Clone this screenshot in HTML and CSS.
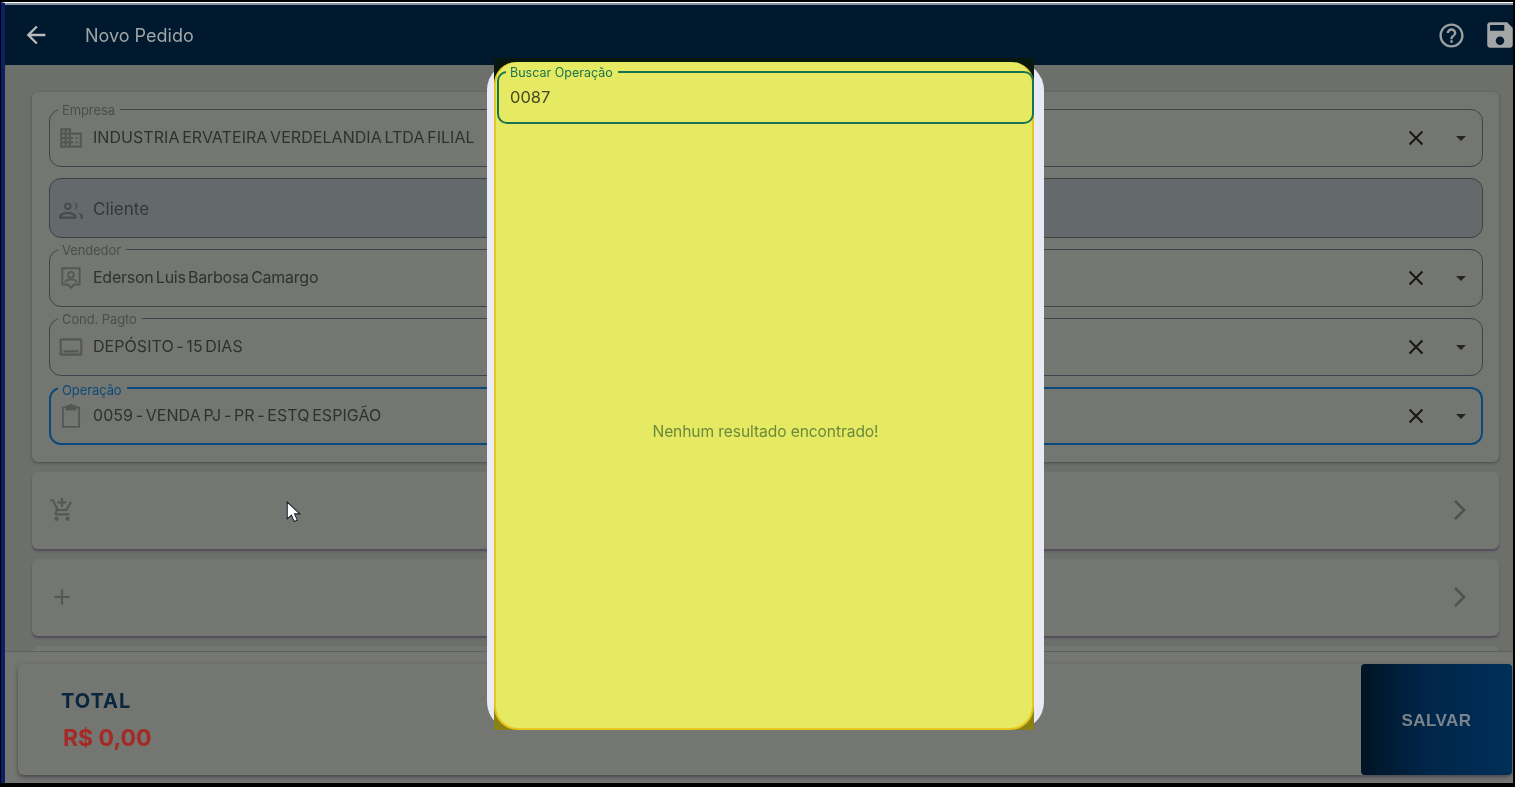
FILE: index.html
```html
<!DOCTYPE html>
<html lang="pt-BR">
<head>
    <meta charset="UTF-8">
    <title>Novo Pedido</title>
    <link rel="stylesheet" href="styles.css">
</head>
<body>
    <div class="screen">
        <header class="topbar">
            <svg class="icon back" viewBox="0 0 24 24"><path d="M20 11H7.83l5.59-5.59L12 4l-8 8 8 8 1.41-1.41L7.83 13H20v-2z"/></svg>
            <span class="title">Novo Pedido</span>
            <svg class="icon help" viewBox="0 0 24 24"><path d="M11 18h2v-2h-2v2zm1-16C6.48 2 2 6.48 2 12s4.48 10 10 10 10-4.48 10-10S17.52 2 12 2zm0 18c-4.41 0-8-3.59-8-8s3.59-8 8-8 8 3.59 8 8-3.59 8-8 8zm0-14c-2.21 0-4 1.79-4 4h2c0-1.1.9-2 2-2s2 .9 2 2c0 2-3 1.75-3 5h2c0-2.25 3-2.5 3-5 0-2.21-1.79-4-4-4z"/></svg>
            <svg class="icon save" viewBox="0 0 24 24"><path d="M17 3H5c-1.11 0-2 .9-2 2v14c0 1.1.89 2 2 2h14c1.1 0 2-.9 2-2V7l-4-4zm-5 16c-1.66 0-3-1.34-3-3s1.34-3 3-3 3 1.34 3 3-1.34 3-3 3zm3-10H5V5h10v4z"/></svg>
        </header>

        <main class="content">
            <section class="card">
                <div class="field">
                    <span class="field-label">Empresa</span>
                    <svg class="icon field-icon" viewBox="0 0 24 24"><path d="M12 7V3H2v18h20V7H12zM6 19H4v-2h2v2zm0-4H4v-2h2v2zm0-4H4V9h2v2zm0-4H4V5h2v2zm4 12H8v-2h2v2zm0-4H8v-2h2v2zm0-4H8V9h2v2zm0-4H8V5h2v2zm10 12h-8v-2h2v-2h-2v-2h2v-2h-2V9h8v10zm-2-8h-2v2h2v-2zm0 4h-2v2h2v-2z"/></svg>
                    <span class="field-value">INDUSTRIA ERVATEIRA VERDELANDIA LTDA FILIAL</span>
                    <svg class="close" viewBox="0 0 24 24"><path d="M5 5l14 14M19 5L5 19"/></svg>
                    <span class="caret"></span>
                </div>

                <div class="field field-disabled">
                    <svg class="icon field-icon" viewBox="0 0 24 24"><path d="M9 12c1.9 0 3.5-1.6 3.5-3.5S10.900 5 9 5 5.500 6.600 5.500 8.500 7.100 12 9 12zm0-5.200c.9 0 1.700.8 1.700 1.700s-.8 1.700-1.700 1.700-1.700-.8-1.700-1.700S8.100 6.800 9 6.800zM9 13.800c-2.700 0-8 1.300-8 3.900V20h16v-2.300c0-2.600-5.300-3.900-8-3.900zM3 18c.3-.9 3.500-2.400 6-2.400s5.700 1.500 6 2.400H3zM14.500 5.200c1.300.8 2 1.900 2 3.300s-.7 2.500-2 3.300c2-.1 3.500-1.500 3.500-3.300s-1.500-3.200-3.500-3.300zM17.800 14.200c1.700.9 3 2 3 3.500V20H23v-2.300c0-1.800-2.500-3.100-5.200-3.500z"/></svg>
                    <span class="field-value field-value-large">Cliente</span>
                </div>

                <div class="field">
                    <span class="field-label">Vendedor</span>
                    <svg class="icon field-icon" viewBox="0 0 24 24"><path class="line" d="M4 3h16v15h-5l-3 3-3-3H4z"/><circle class="line" cx="12" cy="9" r="2.700"/><path class="line" d="M6.500 16c1-2 3-2.700 5.500-2.700s4.500.7 5.500 2.700"/></svg>
                    <span class="field-value field-value-mixed">Ederson Luis Barbosa Camargo</span>
                    <svg class="close" viewBox="0 0 24 24"><path d="M5 5l14 14M19 5L5 19"/></svg>
                    <span class="caret"></span>
                </div>

                <div class="field">
                    <span class="field-label">Cond. Pagto</span>
                    <svg class="icon field-icon" viewBox="0 0 24 24"><path d="M21 4H3c-.8 0-1.500.7-1.500 1.500v13c0 .8.700 1.500 1.500 1.500h18c.8 0 1.500-.7 1.500-1.500v-13C22.500 4.700 21.800 4 21 4zm-.5 14h-17V6h17v12zM5 15h14v2H5z"/></svg>
                    <span class="field-value">DEPÓSITO - 15 DIAS</span>
                    <svg class="close" viewBox="0 0 24 24"><path d="M5 5l14 14M19 5L5 19"/></svg>
                    <span class="caret"></span>
                </div>

                <div class="field field-focus">
                    <span class="field-label">Operação</span>
                    <svg class="icon field-icon" viewBox="0 0 24 24"><path class="line" d="M8 4H4.500v18h15V4H16"/><path class="line fill" d="M8 3h2.500a1.500 1.500 0 0 1 3 0H16v3H8z"/></svg>
                    <span class="field-value">0059 - VENDA PJ - PR - ESTQ ESPIGÃO</span>
                    <svg class="close" viewBox="0 0 24 24"><path d="M5 5l14 14M19 5L5 19"/></svg>
                    <span class="caret"></span>
                </div>
            </section>

            <section class="row">
                <svg class="icon row-icon" viewBox="0 0 24 24"><path d="M11 9h2V6h3V4h-3V1h-2v3H8v2h3v3zm-4 9c-1.100 0-1.990.9-1.990 2S5.900 22 7 22s2-.9 2-2-.9-2-2-2zm10 0c-1.100 0-1.990.9-1.990 2s.89 2 1.990 2 2-.9 2-2-.9-2-2-2zm-9.830-3.250l.03-.12.9-1.630h7.450c.75 0 1.410-.41 1.750-1.030l3.860-7.010L19.420 4h-.01l-1.100 2-2.760 5H8.530l-.13-.27L6.160 6l-.95-2-.94-2H1v2h2l3.600 7.590-1.350 2.450c-.16.28-.25.61-.25.96 0 1.100.9 2 2 2h12v-2H7.420c-.13 0-.25-.11-.25-.25z"/></svg>
                <svg class="chevron" viewBox="0 0 24 24"><path d="M6 1l11 11L6 23"/></svg>
            </section>
            <section class="row">
                <svg class="icon row-icon" viewBox="0 0 24 24"><path d="M19 13h-6v6h-2v-6H5v-2h6V5h2v6h6v2z"/></svg>
                <svg class="chevron" viewBox="0 0 24 24"><path d="M6 1l11 11L6 23"/></svg>
            </section>
            <section class="row"></section>
        </main>

        <footer class="footer">
            <div class="totals">
                <div class="total-text">
                    <span class="total-label">TOTAL</span>
                    <span class="total-value">R$ 0,00</span>
                </div>
                <button class="save-btn">SALVAR</button>
            </div>
        </footer>
    </div>

    <!-- modal de busca por cima da tela -->
    <div class="modal">
        <div class="modal-shell">
            <div class="modal-panel">
                <div class="search">
                    <span class="search-label">Buscar Operação</span>
                    <span class="search-value">0087</span>
                </div>
                <p class="empty">Nenhum resultado encontrado!</p>
            </div>
        </div>
    </div>

    <svg class="cursor" viewBox="0 0 14 22"><path d="M1 1v16l4-3.600 2.600 6.200 3-1.300-2.600-6h5z"/></svg>
</body>
</html>
```

FILE: styles.css
```css
* {
    box-sizing: border-box;
}
body {
    margin: 0;
    height: 787px;
    padding: 2px 2px 4px 1px;
    background-color: black;
    font-family: Inter, "Liberation Sans", sans-serif;
    overflow: hidden;
}
.screen {
    height: 100%;
    border-left: 4px solid #0b1f68;
    border-top: 1px solid white;
    background-color: #6d6f6b;
    display: flex;
    flex-direction: column;
    overflow: hidden;
    filter: blur(0.4px); /* a captura original e meio borrada */
}
.icon {
    fill: currentColor;
    flex: none;
}

/* barra superior */
.topbar {
    flex: none;
    height: 62px;
    border-top: 2px solid #8a95a3;
    background-color: #00192f;
    color: #a7acab;
    display: flex;
    align-items: center;
    padding-right: 0;
}
.back {
    width: 28px;
    height: 28px;
    margin-left: 17px;
    color: #b8bcbb;
}
.title {
    margin-left: 35px;
    font-size: 18px;
    flex: 1;
    color: #a0a5a5;
}
.help {
    width: 29px;
    height: 29px;
    color: #9a9f9f;
}
.save {
    width: 34px;
    height: 34px;
    margin-left: 17px;
    margin-right: -4px;
    color: #a2a6a6;
}

/* conteudo */
.content {
    flex: 1;
    min-height: 0;
    overflow: hidden;
    padding: 27px 14px 0 27px;
    display: flex;
    flex-direction: column;
    gap: 10px;
}
.card {
    flex: none;
    background-color: #747672;
    border-radius: 6px;
    padding: 17px 16px 17px 17px;
    display: flex;
    flex-direction: column;
    gap: 11px;
    box-shadow: 0 1px 3px rgba(40, 35, 50, 0.5);
}
.field {
    position: relative;
    height: 58px;
    border: 1px solid #41424b;
    border-radius: 12px;
    display: flex;
    padding: 16px 16px 0 8px;
}
.field-label {
    position: absolute;
    left: 8px;
    top: -7px;
    padding: 0 5px 0 4px;
    background-color: #747672;
    font-size: 13px;
    line-height: 15px;
    letter-spacing: -0.1px;
    color: #4c4e4c;
}
.field-icon {
    width: 26px;
    height: 26px;
    margin-top: -1px;
    color: #555755;
}
.field-value {
    margin-left: 9px;
    font-size: 16px;
    line-height: 22px;
    color: #2f312f;
    flex: 1;
    letter-spacing: 0.05px;
    word-spacing: -1.9px;
}
.field-value-mixed {
    letter-spacing: -0.25px;
}
.close {
    width: 22px;
    height: 22px;
    margin-top: 1px;
    fill: none;
    stroke: #161616;
    stroke-width: 2.2;
}
.caret {
    width: 0;
    height: 0;
    margin: 10px 0 0 29px;
    border-left: 5px solid transparent;
    border-right: 5px solid transparent;
    border-top: 5px solid #242424;
}
.field-disabled {
    height: 60px;
    padding-top: 19px;
    background-color: #646a6c;
    border-color: #3f4245;
    border-width: 1.5px;
}
.field-disabled .field-icon {
    color: #474a4a;
}
.field-value-large {
    font-size: 17px;
    color: #333836;
}
.field-focus {
    border: 2px solid #0b4a7c;
    padding-left: 7px;
    padding-top: 15px;
    padding-right: 15px;
}
.field-focus .field-label {
    left: 7px;
    top: -6px;
    color: #0d4a78;
}
.line {
    fill: none;
    stroke: #555755;
    stroke-width: 1.700;
}
.fill {
    fill: #555755;
}
.row {
    flex: none;
    height: 77px;
    background-color: #747672;
    border-radius: 6px;
    display: flex;
    align-items: center;
    justify-content: space-between;
    padding: 0 29px 0 17px;
    box-shadow: 0 2px 2px rgba(75, 65, 85, 0.8);
}
.row-icon {
    width: 26px;
    height: 26px;
    margin-top: -1px;
    color: #555755;
}
.chevron {
    width: 20px;
    height: 24px;
    margin-top: -1px;
    fill: none;
    stroke: #4f514e;
    stroke-width: 3;
}

/* rodape */
.footer {
    flex: none;
    height: 132px;
    background-color: #747672;
    border-top: 1px solid #5f5e62;
    padding: 12px 1px 8px 13px;
    position: relative;
}
.totals {
    height: 100%;
    border-radius: 6px;
    display: flex;
    justify-content: space-between;
    box-shadow: 0 2px 4px rgba(60, 55, 70, 0.8);
}
.total-text {
    display: flex;
    flex-direction: column;
    padding: 25px 0 0 43px;
}
.total-label {
    font-size: 20px;
    line-height: 24px;
    font-weight: 700;
    letter-spacing: 1px;
    color: #08263e;
}
.total-value {
    margin-top: 11px;
    margin-left: 2px;
    font-size: 23px;
    line-height: 28px;
    font-weight: 700;
    color: #a52a25;
}
.save-btn {
    width: 151px;
    border: none;
    border-radius: 4px;
    padding-top: 4px;
    background: linear-gradient(90deg, #001525, #00264a 45%, #002f58);
    color: #7b838b;
    font-family: "Liberation Sans", sans-serif;
    font-size: 17px;
    font-weight: 700;
    letter-spacing: 0.4px;
}

/* modal */
.modal {
    position: absolute;
    left: 487px;
    top: 62px;
    width: 557px;
    height: 668px;
    background-color: #e8eaf6;
    border-radius: 28px;
    filter: blur(0.4px);
}
.modal-shell {
    position: absolute;
    left: 7px;
    top: -4px;
    width: 540px;
    height: 672px;
    padding-top: 4px;
    background: linear-gradient(#08180f 20%, #8a8214 20%);
}
.modal-panel {
    height: 100%;
    background-color: #e6ea62;
    border: solid #e8c51f;
    border-width: 0 2px 2px 2px;
    border-radius: 22px 22px 24px 24px;
    display: flex;
    flex-direction: column;
}
.search {
    position: relative;
    flex: none;
    height: 53px;
    margin: 9px -2px 0 1px;
    border: 2px solid #1a7350;
    border-radius: 10px;
    padding: 13px 0 0 11px;
}
.search-label {
    position: absolute;
    left: 7px;
    top: -8px;
    padding: 0 5px 0 4px;
    background-color: #e6ea62;
    font-size: 12.5px;
    line-height: 15px;
    color: #1a7350;
}
.search-value {
    font-size: 16.500px;
    line-height: 22px;
    color: #474a22;
}
.empty {
    flex: 1;
    margin: 0;
    padding: 10px 0 0 3px;
    display: flex;
    align-items: center;
    justify-content: center;
    font-size: 15.600px;
    color: #6b8a3c;
    letter-spacing: -0.1px;
}
.cursor {
    position: absolute;
    left: 286px;
    top: 501px;
    width: 15px;
    height: 23px;
    fill: white;
    stroke: #1c2230;
    stroke-width: 1;
}
```
